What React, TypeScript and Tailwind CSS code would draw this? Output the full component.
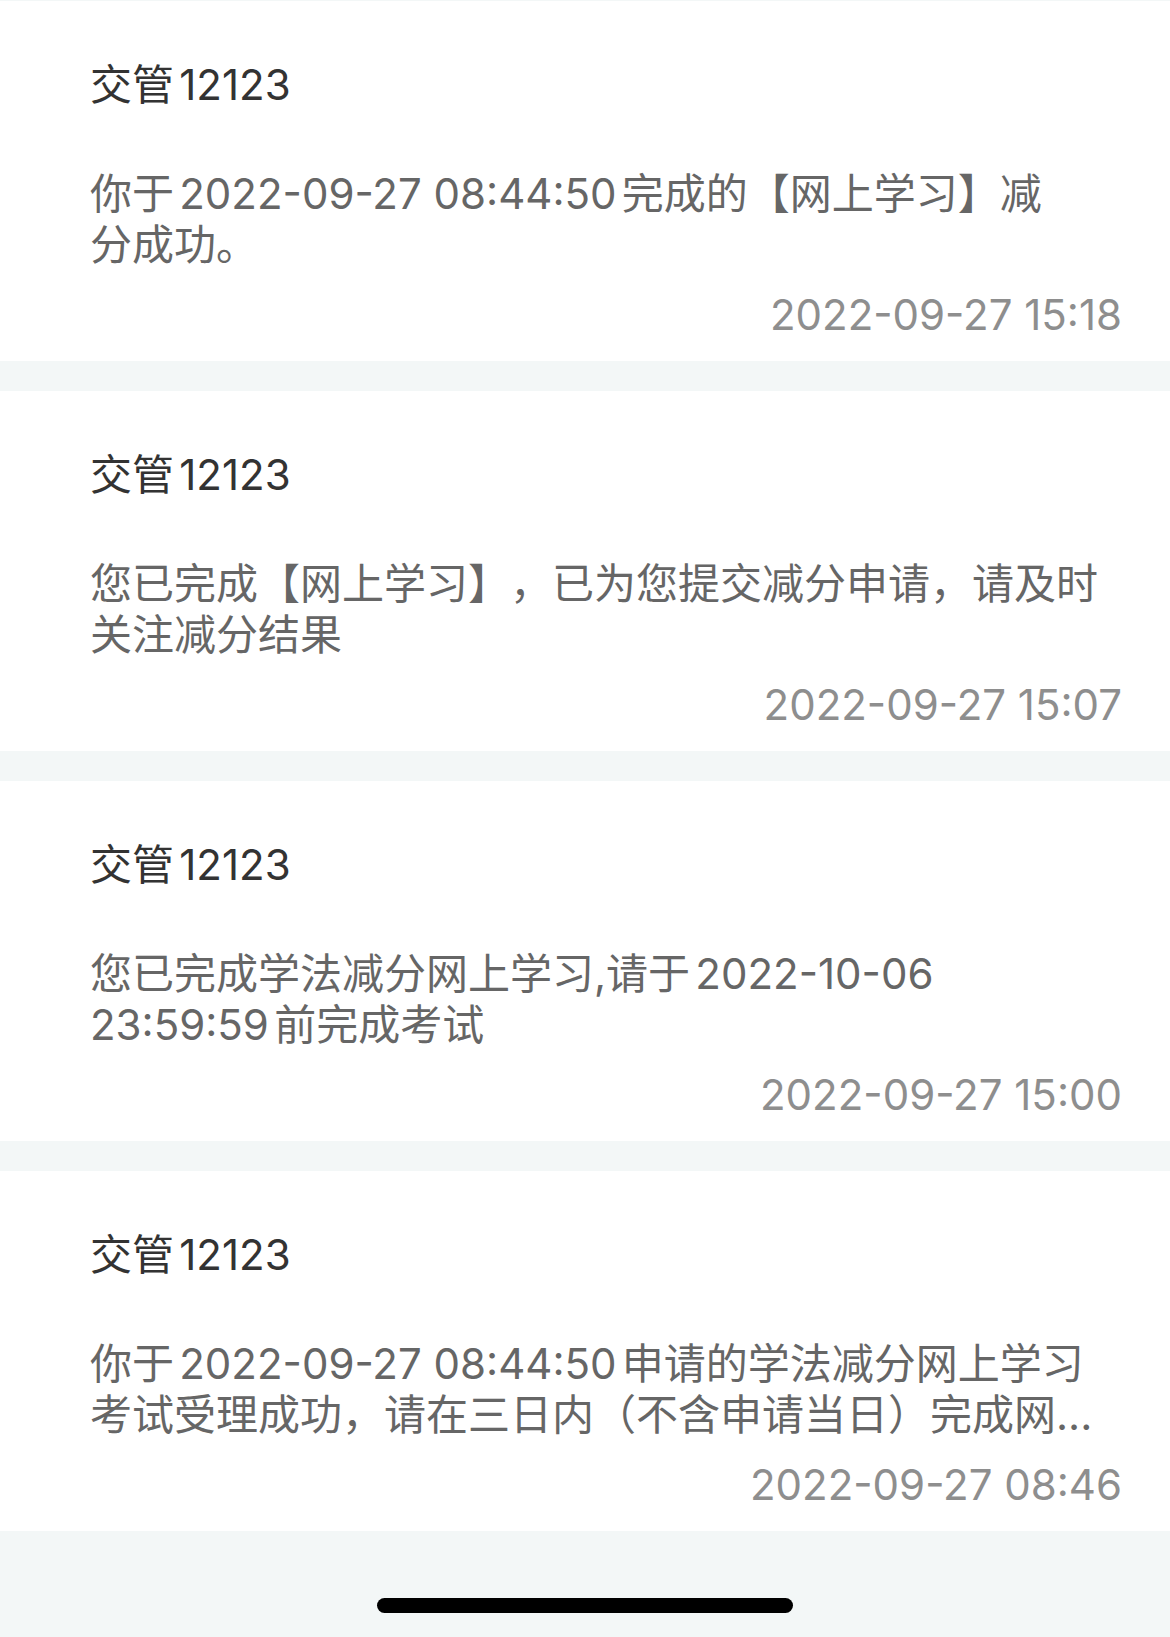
const MESSAGES = [
  {
    lines: ["你于2022-09-27 08:44:50完成的【网上学习】减", "分成功。"],
    time: "2022-09-27 15:18",
  },
  {
    lines: ["您已完成【网上学习】，已为您提交减分申请，请及时", "关注减分结果"],
    time: "2022-09-27 15:07",
  },
  {
    lines: ["您已完成学法减分网上学习,请于2022-10-06", "23:59:59前完成考试"],
    time: "2022-09-27 15:00",
  },
  {
    lines: [
      "你于2022-09-27 08:44:50申请的学法减分网上学习",
      "考试受理成功，请在三日内（不含申请当日）完成网...",
    ],
    time: "2022-09-27 08:46",
  },
];

function MessageCard({ lines, time }: { lines: string[]; time: string }) {
  return (
    <div className="h-[360px] bg-white pl-[90px] pr-[48px] pt-[58px] text-[42px] leading-[51px] [text-autospace:normal] [text-spacing-trim:space-all]">
      <div className="text-[#333333]">交管12123</div>
      <div className="mt-[58px] text-[#666666]">
        {lines.map((l, i) => (
          <div key={i} className="whitespace-nowrap">
            {l}
          </div>
        ))}
      </div>
      <div className="mt-[19px] text-right text-[#8e8e8e]">{time}</div>
    </div>
  );
}

export default function App() {
  return (
    <div
      className="flex h-[1637px] w-[1170px] flex-col overflow-hidden bg-[#f3f7f7] pt-px"
      style={{ fontFamily: '"Inter", "Noto Sans CJK SC", sans-serif' }}
    >
      <div className="flex flex-col gap-[30px]">
        {MESSAGES.map((m, i) => (
          <MessageCard key={i} lines={m.lines} time={m.time} />
        ))}
      </div>
      <div className="flex flex-1 items-end justify-center pb-[24px]">
        <div className="h-[15px] w-[416px] rounded-full bg-black" />
      </div>
    </div>
  );
}
